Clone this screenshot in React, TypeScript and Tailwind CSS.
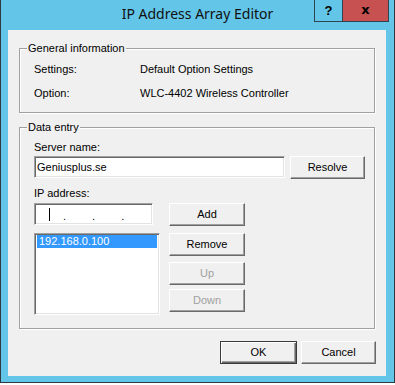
import React from "react";

const btn =
  "h-[23px] bg-[#f0f0f0] border border-t-white border-l-white border-r-[#696969] border-b-[#696969] shadow-[inset_-1px_-1px_0_#a0a0a0] flex items-center justify-center";

const sunken =
  "bg-white border border-t-[#a0a0a0] border-l-[#a0a0a0] border-r-white border-b-white shadow-[inset_1px_1px_0_#696969,inset_-1px_-1px_0_#e3e3e3]";

const group =
  "border border-[#a0a0a0] shadow-[1px_1px_0_#fff,inset_1px_1px_0_#fff] w-[356px] ml-[11px] px-[14px] pr-[9px]";

function Legend({ children }: { children: React.ReactNode }) {
  return <legend className="leading-[13px] -ml-[7px] px-[1px] bg-[#f0f0f0]">{children}</legend>;
}

export default function App() {
  return (
    <div className="w-[395px] h-[385px] bg-white font-['Liberation_Sans',Arial,sans-serif] text-[11px] text-black">
      <div className="w-[395px] h-[383px] bg-[#63c5e7] border-x border-b border-[#2f3a40] flex flex-col">
        {/* title bar */}
        <div className="h-[30px] grid grid-cols-[1fr_auto_1fr]">
          <div />
          <div className="font-['Noto_Sans',sans-serif] text-[14px] text-[#111] pt-[4px] leading-[20px]">
            IP Address Array Editor
          </div>
          <div className="flex justify-end items-start pr-[5px]">
            <div className="w-[28px] h-[22px] border-l border-b border-[#2f4350] flex items-center justify-center font-['Liberation_Sans',sans-serif] font-bold text-[13px] text-black">
              ?
            </div>
            <div className="w-[47px] h-[22px] bg-[#c75050] border-x border-b border-[#2f4350] flex items-center justify-center font-['DejaVu_Sans',sans-serif] font-bold text-[13px] leading-none text-black pb-[2px]">
              x
            </div>
          </div>
        </div>

        {/* client */}
        <div className="ml-[7px] w-[378px] h-[346px] bg-[#f0f0f0] flex flex-col">
          <fieldset className={group + " mt-[12px] pb-[12px]"}>
            <Legend>General information</Legend>
            <div className="grid grid-cols-[106px_1fr] gap-y-[11px] pt-[8px] leading-[13px]">
              <div>Settings:</div>
              <div>Default Option Settings</div>
              <div>Option:</div>
              <div>WLC-4402 Wireless Controller</div>
            </div>
          </fieldset>

          <fieldset className={group + " mt-[8px] pb-[13px]"}>
            <Legend>Data entry</Legend>
            <div className="leading-[13px] mt-[7px]">Server name:</div>
            <div className="flex items-start gap-[5px] mt-[2px]">
              <div className={sunken + " w-[251px] h-[22px] flex items-center pl-[2px]"}>Geniusplus.se</div>
              <button className={btn + " w-[75px] text-black"}>Resolve</button>
            </div>
            <div className="leading-[13px] mt-[8px]">IP address:</div>
            <div className="flex items-start mt-[3px]">
              <div className="flex flex-col w-[135px]">
                <div className={sunken + " w-[119px] h-[22px] flex items-center pl-[14px]"}>
                  <div className="w-px h-[13px] bg-black" />
                  <span className="ml-[13px] mt-[4px]">.</span>
                  <span className="ml-[26px] mt-[4px]">.</span>
                  <span className="ml-[26px] mt-[4px]">.</span>
                </div>
                <div className={sunken + " w-[126px] h-[82px] mt-[8px] p-[2px] pt-[1px]"}>
                  <div className="bg-[#3399ff] text-white h-[13px] leading-[13px] pl-[2px]">192.168.0.100</div>
                </div>
              </div>
              <div className="flex flex-col">
                <button className={btn + " w-[76px] text-black"}>Add</button>
                <button className={btn + " w-[76px] mt-[7px] text-black"}>Remove</button>
                <button className={btn + " w-[76px] mt-[6px] text-[#a0a0a0]"}>Up</button>
                <button className={btn + " w-[76px] mt-[4px] text-[#a0a0a0]"}>Down</button>
              </div>
            </div>
          </fieldset>

          <div className="flex justify-end gap-[4px] pr-[10px] mt-[12px]">
            <button className="w-[77px] h-[23px] bg-[#f0f0f0] border border-[#3a3a3a] shadow-[inset_1px_1px_0_#fff,inset_-1px_-1px_0_#696969,inset_-2px_-2px_0_#a0a0a0] flex items-center justify-center text-black">
              OK
            </button>
            <button className={btn + " w-[75px] text-black"}>Cancel</button>
          </div>
        </div>
      </div>
    </div>
  );
}
